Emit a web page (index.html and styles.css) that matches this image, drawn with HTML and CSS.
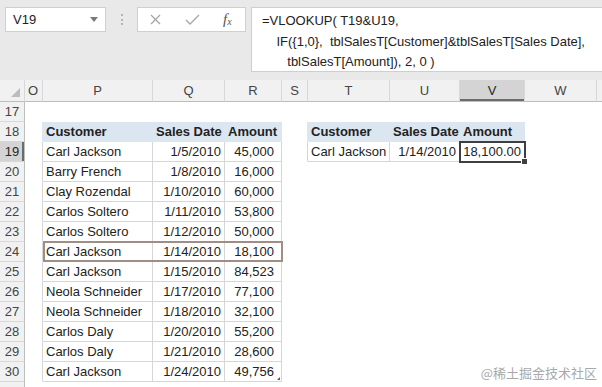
FILE: index.html
```html
<!DOCTYPE html>
<html lang="en">
<head>
    <meta charset="UTF-8">
    <title>VLOOKUP two criteria</title>
    <link rel="stylesheet" href="styles.css">
</head>
<body>
    <div class="app">
        <div class="toolbar">
            <div class="namebox">
                <span>V19</span>
                <svg class="drop" width="8" height="5" viewBox="0 0 8 5"><path d="M0 0 L8 0 L4 5 Z" fill="#7a7a7a"/></svg>
            </div>
            <div class="grip"></div>
            <div class="fxbtns">
                <svg width="11" height="11" viewBox="0 0 11 11"><path d="M1 1 L10 10 M10 1 L1 10" stroke="#a6a6a6" stroke-width="1.3" fill="none"/></svg>
                <svg width="15" height="11" viewBox="0 0 15 11"><path d="M1 6 L5 10 L14 1" stroke="#a6a6a6" stroke-width="1.3" fill="none"/></svg>
                <span class="fx">f<sub>x</sub></span>
            </div>
            <div class="formula">=VLOOKUP( T19&amp;U19,
    IF({1,0},  tblSalesT[Customer]&amp;tblSalesT[Sales Date],
       tblSalesT[Amount]), 2, 0 )</div>
        </div>

        <div class="grid">
            <table class="sheet">
                <colgroup>
                    <col style="width:25px"><col style="width:18px"><col style="width:110px"><col style="width:72px"><col style="width:57px">
                    <col style="width:26px"><col style="width:82px"><col style="width:70px"><col style="width:65px"><col style="width:72px"><col style="width:20px">
                </colgroup>
                <tr class="colhdr">
                    <td class="corner"><span class="tri"></span></td>
                    <td class="left">O</td><td>P</td><td>Q</td><td>R</td><td>S</td><td>T</td><td>U</td><td class="selcol">V</td><td>W</td><td></td>
                </tr>
                <tr>
                    <td class="rh">17</td><td></td><td></td><td></td><td></td><td></td><td></td><td></td><td></td><td></td><td></td>
                </tr>
                <tr>
                    <td class="rh">18</td><td class="edge-hd"></td>
                    <td class="hd">Customer</td><td class="hd">Sales Date</td><td class="hd">Amount</td>
                    <td class="edge-hd"></td>
                    <td class="hd">Customer</td><td class="hd">Sales Date</td><td class="hd">Amount</td>
                    <td></td><td></td>
                </tr>
                <tr>
                    <td class="rh selrow">19</td><td class="edge"></td>
                    <td class="c">Carl Jackson</td><td class="c num">1/5/2010</td><td class="c amt">45,000</td>
                    <td class="edge"></td>
                    <td class="c">Carl Jackson</td><td class="c num">1/14/2010</td><td class="c num sel">18,100.00</td>
                    <td></td><td></td>
                </tr>
                <tr>
                    <td class="rh">20</td><td class="edge"></td>
                    <td class="c">Barry French</td><td class="c num">1/8/2010</td><td class="c amt">16,000</td>
                    <td></td><td></td><td></td><td></td><td></td><td></td>
                </tr>
                <tr>
                    <td class="rh">21</td><td class="edge"></td>
                    <td class="c">Clay Rozendal</td><td class="c num">1/10/2010</td><td class="c amt">60,000</td>
                    <td></td><td></td><td></td><td></td><td></td><td></td>
                </tr>
                <tr>
                    <td class="rh">22</td><td class="edge"></td>
                    <td class="c">Carlos Soltero</td><td class="c num">1/11/2010</td><td class="c amt">53,800</td>
                    <td></td><td></td><td></td><td></td><td></td><td></td>
                </tr>
                <tr>
                    <td class="rh">23</td><td class="edge"></td>
                    <td class="c">Carlos Soltero</td><td class="c num">1/12/2010</td><td class="c amt">50,000</td>
                    <td></td><td></td><td></td><td></td><td></td><td></td>
                </tr>
                <tr class="match">
                    <td class="rh">24</td><td class="edge"></td>
                    <td class="c">Carl Jackson</td><td class="c num">1/14/2010</td><td class="c amt">18,100</td>
                    <td></td><td></td><td></td><td></td><td></td><td></td>
                </tr>
                <tr>
                    <td class="rh">25</td><td class="edge"></td>
                    <td class="c">Carl Jackson</td><td class="c num">1/15/2010</td><td class="c amt">84,523</td>
                    <td></td><td></td><td></td><td></td><td></td><td></td>
                </tr>
                <tr>
                    <td class="rh">26</td><td class="edge"></td>
                    <td class="c">Neola Schneider</td><td class="c num">1/17/2010</td><td class="c amt">77,100</td>
                    <td></td><td></td><td></td><td></td><td></td><td></td>
                </tr>
                <tr>
                    <td class="rh">27</td><td class="edge"></td>
                    <td class="c">Neola Schneider</td><td class="c num">1/18/2010</td><td class="c amt">32,100</td>
                    <td></td><td></td><td></td><td></td><td></td><td></td>
                </tr>
                <tr>
                    <td class="rh">28</td><td class="edge"></td>
                    <td class="c">Carlos Daly</td><td class="c num">1/20/2010</td><td class="c amt">55,200</td>
                    <td></td><td></td><td></td><td></td><td></td><td></td>
                </tr>
                <tr>
                    <td class="rh">29</td><td class="edge"></td>
                    <td class="c">Carlos Daly</td><td class="c num">1/21/2010</td><td class="c amt">28,600</td>
                    <td></td><td></td><td></td><td></td><td></td><td></td>
                </tr>
                <tr>
                    <td class="rh">30</td><td class="edge"></td>
                    <td class="c">Carl Jackson</td><td class="c num">1/24/2010</td><td class="c amt last">49,756</td>
                    <td></td><td></td><td></td><td></td><td></td><td></td>
                </tr>
                <tr>
                    <td class="rh"></td><td></td><td></td><td></td><td></td><td></td><td></td><td></td><td></td><td></td><td></td>
                </tr>
            </table>
            <div class="match-box"></div>
        </div>

        <div class="watermark">@稀土掘金技术社区</div>
    </div>
</body>
</html>
```

FILE: styles.css
```css
body {
    margin: 0;
    font-family: "Liberation Sans", Arial, sans-serif;
    background-color: #fff;
}

.app {
    width: 602px;
    height: 387px;
    overflow: hidden;
    position: relative;
}

/* formula bar */
.toolbar {
    display: flex;
    align-items: flex-start;
    height: 80px;
    box-sizing: border-box;
    padding: 7px 0 0 5px;
    background-color: #e9e9e9;
}

.namebox {
    width: 101px;
    height: 25px;
    box-sizing: border-box;
    background-color: #fff;
    border: 1px solid #cfcfcf;
    display: flex;
    align-items: center;
    justify-content: space-between;
    padding: 0 7px 0 7px;
    font-size: 13px;
    color: #222;
}

.grip {
    width: 0;
    height: 11px;
    margin: 7px 14px 0 15px;
    border-left: 2px dotted #b5b5b5;
}

.fxbtns {
    width: 109px;
    height: 25px;
    box-sizing: border-box;
    background-color: #fff;
    border: 1px solid #cfcfcf;
    display: flex;
    align-items: center;
    gap: 24px;
    padding-left: 12px;
}

.fx {
    font-family: "Liberation Serif", serif;
    font-style: italic;
    font-size: 15px;
    color: #555;
    margin-left: -1px;
}

.fx sub {
    font-size: 10px;
    vertical-align: -1px;
}

.formula {
    flex: 1;
    height: 65px;
    box-sizing: border-box;
    margin-left: 5px;
    margin-right: -2px;
    background-color: #fff;
    border: 1px solid #cfcfcf;
    padding: 3px 0 0 10px;
    font-size: 13px;
    line-height: 20.5px;
    color: #222;
    white-space: pre;
}

/* worksheet */
.grid {
    position: relative;
}

.sheet {
    border-collapse: separate;
    border-spacing: 0;
    table-layout: fixed;
    width: 617px;
    font-size: 13px;
    color: #222;
}

.sheet td {
    box-sizing: border-box;
    height: 20px;
    padding: 0 3px;
    border-right: 1px solid transparent;
    border-bottom: 1px solid transparent;
    white-space: nowrap;
    line-height: 19px;
}

.colhdr td {
    height: 22px;
    background-color: #f1f1f1;
    border-right-color: #d8d8d8;
    border-bottom-color: #bdbdbd;
    text-align: center;
    color: #444;
}

.colhdr td.left {
    text-align: left;
    padding-left: 3px;
}

.colhdr td.corner {
    position: relative;
    padding: 0;
}

.tri {
    position: absolute;
    right: 4px;
    bottom: 4px;
    width: 0;
    height: 0;
    border-left: 9px solid transparent;
    border-bottom: 9px solid #bcbcbc;
}

.colhdr td.selcol {
    background-color: #d4d4d4;
    box-shadow: inset 0 -2px #6b6b6b;
    color: #262626;
}

.sheet td.rh {
    background-color: #f1f1f1;
    text-align: center;
    padding: 0;
    border-right-color: #bdbdbd;
    border-bottom-color: #d8d8d8;
    color: #444;
}

.sheet td.selrow {
    background-color: #d4d4d4;
    box-shadow: inset -2px 0 #6b6b6b;
    color: #262626;
}

.sheet td.hd {
    background-color: #dce6f1;
    border-right-color: #dce6f1;
    border-bottom-color: #dce6f1;
    font-weight: bold;
}

.sheet td.edge-hd {
    border-right-color: #dce6f1;
}

.sheet td.edge {
    border-right-color: #d6d6d6;
}

.sheet td.c {
    border-right-color: #d6d6d6;
    border-bottom-color: #d6d6d6;
}

.sheet td.num {
    text-align: right;
}

.sheet td.amt {
    text-align: right;
    padding-right: 7px;
}

.sheet td.sel {
    position: relative;
    outline: 2px solid #3f3f3f;
    outline-offset: -1px;
}

.sheet td.sel::after {
    content: "";
    position: absolute;
    right: -4px;
    bottom: -4px;
    width: 5px;
    height: 5px;
    background-color: #3f3f3f;
    border: 1px solid #fff;
}

.sheet td.last {
    position: relative;
}

.sheet td.last::after {
    content: "";
    position: absolute;
    right: 1px;
    bottom: 1px;
    width: 0;
    height: 0;
    border-left: 3px solid transparent;
    border-bottom: 3px solid #555;
}

/* matching row outline over P24:R24 */
.match-box {
    position: absolute;
    left: 43px;
    top: 161px;
    width: 240px;
    height: 21px;
    box-sizing: border-box;
    border: 2px solid #a08e86;
}

.watermark {
    position: absolute;
    right: 5px;
    bottom: 5px;
    font-family: "Noto Sans CJK SC", sans-serif;
    font-size: 13px;
    color: #a9a9a9;
}
```
